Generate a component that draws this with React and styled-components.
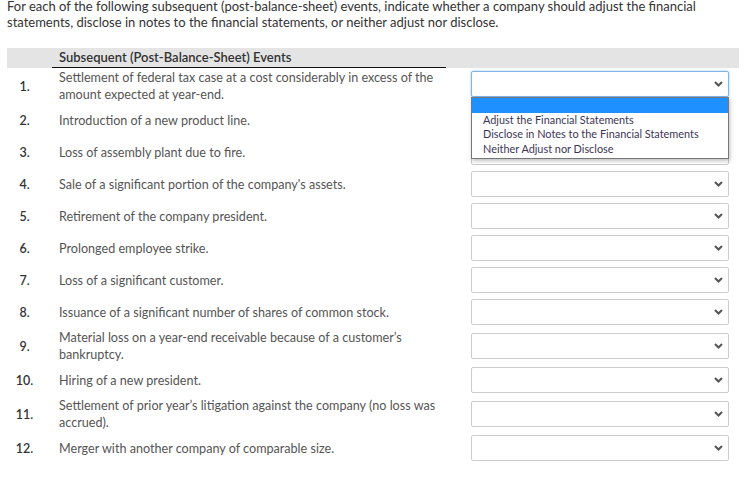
import React from 'react';
import styled, { createGlobalStyle } from 'styled-components';

const GlobalStyle = createGlobalStyle`
  body {
    margin: 0;
    background: #fff;
    font-family: Lato, "Open Sans", sans-serif;
  }
`;

const Page = styled.div`
  padding: 0 6px 0 7px;
  width: 732px;
`;

const Intro = styled.p`
  margin: -2px 0 0;
  font-size: 13px;
  line-height: 16px;
  color: #333;
`;

const Table = styled.div`
  margin-top: 18px;
`;

const HeaderRow = styled.div`
  display: grid;
  grid-template-columns: 45px 394px 1fr;
  background: #e4e4e4;
  height: 20px;
`;

const HeaderCell = styled.div`
  padding-left: 7px;
  font-size: 13px;
  font-weight: 600;
  line-height: 19px;
  color: #333;
  border-bottom: 1px solid #111;
`;

const Row = styled.div`
  display: grid;
  grid-template-columns: 45px 394px 1fr;
  align-items: center;
  min-height: 32px;
`;

const Num = styled.div`
  padding-right: 10px;
  text-align: center;
  font-size: 12.5px;
  font-weight: 600;
  color: #333;
`;

const Text = styled.div`
  padding: 1px 0 1px 7px;
  font-size: 12.6px;
  line-height: 17px;
  color: #555;
`;

const SelectCell = styled.div`
  position: relative;
  align-self: ${(p) => (p.$top ? 'start' : 'center')};
  padding: 3px 10px 3px 25px;
`;

const Select = styled.div`
  height: 26px;
  box-sizing: border-box;
  border: 1px solid ${(p) => (p.$open ? '#7fb4e6' : '#ccc')};
  border-radius: 2px;
  background: #fff;
  display: flex;
  align-items: center;
  justify-content: flex-end;
  padding-right: 5px;
  box-shadow: ${(p) => (p.$open ? '0 0 3px rgba(102,175,233,0.6)' : 'none')};
`;

const Menu = styled.div`
  position: absolute;
  left: 25px;
  right: 10px;
  top: 29px;
  background: #fff;
  border: 1px solid #777;
  box-shadow: 1px 2px 4px rgba(0, 0, 0, 0.25);
  z-index: 2;
  padding-bottom: 2px;
`;

const Option = styled.div`
  height: 14.5px;
  line-height: 14.5px;
  padding-left: 11px;
  font-size: 10.9px;
  color: #3c3556;
  background: ${(p) => (p.$active ? '#1e90ff' : 'transparent')};
`;

const Chevron = () => (
  <svg width="9" height="6" viewBox="0 0 9 6">
    <polyline points="1,1 4.5,4.5 8,1" fill="none" stroke="#555" strokeWidth="2" />
  </svg>
);

const events = [
  'Settlement of federal tax case at a cost considerably in excess of the amount expected at year-end.',
  'Introduction of a new product line.',
  'Loss of assembly plant due to fire.',
  "Sale of a significant portion of the company's assets.",
  'Retirement of the company president.',
  'Prolonged employee strike.',
  'Loss of a significant customer.',
  'Issuance of a significant number of shares of common stock.',
  'Material loss on a year-end receivable because of a customer’s bankruptcy.',
  'Hiring of a new president.',
  'Settlement of prior year’s litigation against the company (no loss was accrued).',
  'Merger with another company of comparable size.',
];

const options = [
  'Adjust the Financial Statements',
  'Disclose in Notes to the Financial Statements',
  'Neither Adjust nor Disclose',
];

const App = () => {
  return (
    <Page>
      <GlobalStyle />
      <Intro>
        For each of the following subsequent (post-balance-sheet) events, indicate whether a company should adjust the financial
        statements, disclose in notes to the financial statements, or neither adjust nor disclose.
      </Intro>
      <Table>
        <HeaderRow>
          <div />
          <HeaderCell>Subsequent (Post-Balance-Sheet) Events</HeaderCell>
          <div />
        </HeaderRow>
        {events.map((ev, i) => (
          <Row key={i}>
            <Num>{i + 1}.</Num>
            <Text>{ev}</Text>
            <SelectCell $top={i === 0}>
              <Select $open={i === 0}>
                <Chevron />
              </Select>
              {i === 0 && (
                <Menu>
                  <Option $active />
                  {options.map((o) => (
                    <Option key={o}>{o}</Option>
                  ))}
                </Menu>
              )}
            </SelectCell>
          </Row>
        ))}
      </Table>
    </Page>
  );
};

export default App;
